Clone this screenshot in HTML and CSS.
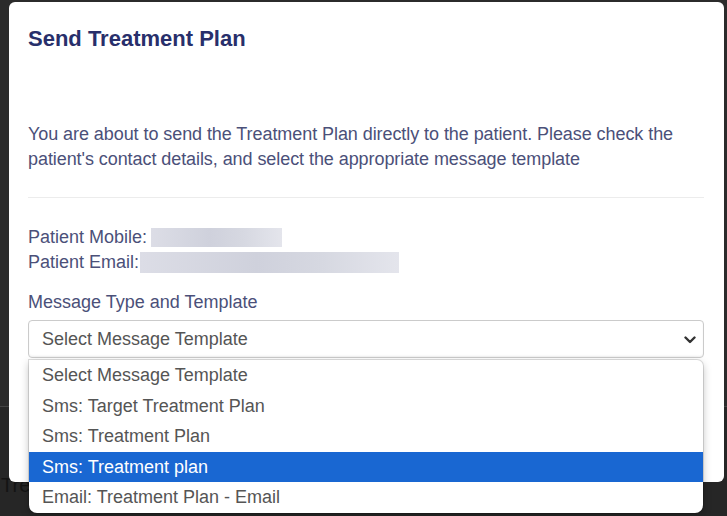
FILE: index.html
```html
<!DOCTYPE html>
<html>
<head>
<meta charset="utf-8">
<link rel="stylesheet" href="styles.css">
</head>
<body>
<div class="page">
  <div class="page-top"></div>
  <div class="page-rule"></div>
  <div class="page-bottom">Trea</div>
</div>

<div class="modal">
  <h2 class="modal-title">Send Treatment Plan</h2>
  <p class="intro">You are about to send the Treatment Plan directly to the patient. Please check the patient's contact details, and select the appropriate message template</p>
  <hr class="divider">
  <div class="contact">
    <div class="contact-row">Patient Mobile: <span class="redact redact-mobile"></span></div>
    <div class="contact-row">Patient Email:<span class="redact redact-email"></span></div>
  </div>
  <label class="field-label">Message Type and Template</label>
  <div class="select-wrap">
    <div class="select">
      <span>Select Message Template</span>
      <svg class="chevron" width="12" height="8" viewBox="0 0 12 8"><path d="M1.5 1.5 L6 6 L10.5 1.5" fill="none" stroke="#333" stroke-width="2.4" stroke-linecap="round" stroke-linejoin="round"/></svg>
    </div>
    <ul class="dropdown">
      <li>Select Message Template</li>
      <li>Sms: Target Treatment Plan</li>
      <li>Sms: Treatment Plan</li>
      <li class="active">Sms: Treatment plan</li>
      <li>Email: Treatment Plan - Email</li>
    </ul>
  </div>
</div>
</body>
</html>
```
FILE: styles.css
```css
* { box-sizing: border-box; }
html, body { margin: 0; padding: 0; }
body {
  width: 727px;
  height: 516px;
  overflow: hidden;
  background: #2b2b2b;
  font-family: "Liberation Sans", Arial, sans-serif;
  position: relative;
}
.page {
  height: 516px;
  display: flex;
  flex-direction: column;
}
.page-top {
  height: 406px;
}
.page-rule {
  height: 1px;
  background: #444;
}
.page-bottom {
  flex: 1;
  background: #262626;
  color: #141414;
  font-size: 20px;
  padding: 68px 0 0 1px;
  line-height: 20px;
}
.modal {
  position: absolute;
  left: 9px;
  top: 2px;
  width: 715px;
  height: 480px;
  background: #fff;
  border-radius: 6px;
  padding: 0 19px;
}
.modal-title {
  margin: 0;
  padding-top: 24px;
  font-size: 22px;
  line-height: 26px;
  font-weight: bold;
  color: #282f6b;
}
.intro {
  margin: 0;
  padding-top: 70px;
  font-size: 18px;
  line-height: 25px;
  color: #4b5079;
  letter-spacing: -0.07px;
}
.divider {
  border: 0;
  border-top: 1px solid #ececec;
  margin: 25px 0 0 0;
  width: 676px;
}
.contact {
  padding-top: 27px;
  font-size: 18px;
  line-height: 25px;
  color: #4b5079;
}
.contact-row {
  display: flex;
  align-items: center;
  height: 25px;
}
.redact {
  display: inline-block;
  height: 19px;
  background: linear-gradient(90deg, #dcdde6 0%, #cfd1dc 45%, #d6d8e1 70%, #e4e5ec 100%);
  filter: blur(0.6px);
}
.redact-mobile { width: 131px; margin-left: 4px; }
.redact-email { width: 259px; height: 21px; margin-left: 1px; }
.field-label {
  display: block;
  margin-top: 15px;
  font-size: 18px;
  line-height: 25px;
  color: #4b5079;
}
.select-wrap {
  position: relative;
  margin-top: 5px;
}
.select {
  height: 38px;
  width: 676px;
  border: 1px solid #cbcbcb;
  border-radius: 4px;
  display: flex;
  align-items: center;
  justify-content: space-between;
  padding: 1px 7px 0 13px;
  font-size: 18px;
  color: #555;
  box-shadow: inset 0 -1px 2px rgba(0,0,0,0.06);
}
.chevron { display: block; }
.dropdown {
  position: absolute;
  left: 1px;
  top: 40px;
  width: 674px;
  margin: 0;
  padding: 0;
  list-style: none;
  background: #fff;
  border-radius: 0 6px 8px 8px;
  box-shadow: 0 0 0 1px rgba(0,0,0,0.12), 0 3px 8px rgba(0,0,0,0.25);
  z-index: 2;
  overflow: hidden;
}
.dropdown li {
  height: 30.5px;
  line-height: 31px;
  padding-left: 13px;
  font-size: 18px;
  color: #555;
}
.dropdown li.active {
  background: #1967d2;
  color: #fff;
}
```
